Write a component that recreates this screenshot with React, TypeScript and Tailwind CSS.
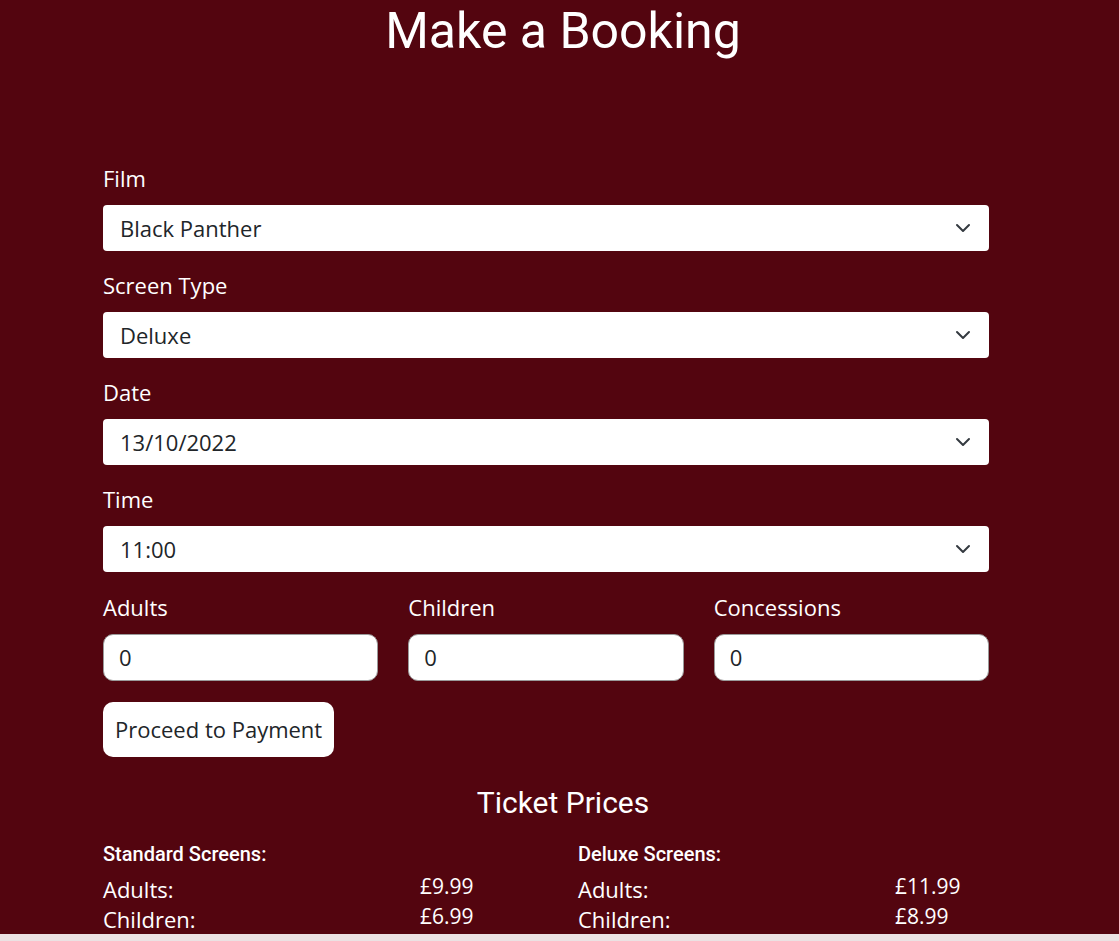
import { ChevronDown } from "lucide-react"

const body = "font-['Open_Sans','DejaVu_Sans',sans-serif]"

function SelectField({ label, value }: { label: string; value: string }) {
  return (
    <div className="mb-[21px]">
      <label className={`block text-[22px] leading-[26px] text-white mb-[14px] ${body}`}>{label}</label>
      <div className="relative h-[46px] bg-white rounded-[4px] flex items-center pl-[17px]">
        <span className={`text-[22px] text-[#212529] ${body}`}>{value}</span>
        <ChevronDown className="absolute right-[14px] top-[11px] w-[24px] h-[24px] text-[#343a40]" strokeWidth={2} />
      </div>
    </div>
  )
}

function NumberField({ label }: { label: string }) {
  return (
    <div>
      <label className={`block text-[22px] leading-[26px] text-white mb-[14px] ${body}`}>{label}</label>
      <div className="h-[47px] bg-white rounded-[10px] border border-[#9a9a9a] flex items-center pl-[15px]">
        <span className={`text-[22px] text-[#212529] ${body}`}>0</span>
      </div>
    </div>
  )
}

function PriceRow({ label, price }: { label: string; price: string }) {
  return (
    <div className="flex items-start h-[30px]">
      <span className={`w-[317px] text-[22px] leading-[30px] text-white ${body}`}>{label}</span>
      <span className={`text-[21px] leading-[30px] text-white -mt-[3px] ${body}`}>{price}</span>
    </div>
  )
}

export default function App() {
  return (
    <div className="min-h-[941px] bg-[#53050f] overflow-hidden">
      <h1 className="text-center text-[50px] leading-[60px] text-white font-['Roboto',sans-serif] pl-[7px] pt-[1px]">
        Make a Booking
      </h1>

      <div className="w-[886px] ml-[103px] mt-[104px]">
        <SelectField label="Film" value="Black Panther" />
        <SelectField label="Screen Type" value="Deluxe" />
        <SelectField label="Date" value="13/10/2022" />
        <SelectField label="Time" value="11:00" />

        <div className="grid grid-cols-3 gap-[30px] pt-[1px]">
          <NumberField label="Adults" />
          <NumberField label="Children" />
          <NumberField label="Concessions" />
        </div>

        <button className={`mt-[21px] h-[55px] px-[12px] bg-white rounded-[10px] text-[22px] text-[#212529] ${body}`}>
          Proceed to Payment
        </button>
      </div>

      <h2 className="text-center text-[30px] leading-[36px] text-white font-['Roboto',sans-serif] pl-[7px] mt-[28px]">
        Ticket Prices
      </h2>

      <div className="ml-[103px] mt-[21px] grid grid-cols-[475px_1fr]">
        <div>
          <h3 className="text-[20px] leading-[24px] font-medium text-white font-['Roboto',sans-serif] mb-[8px]">Standard Screens:</h3>
          <PriceRow label="Adults:" price="£9.99" />
          <PriceRow label="Children:" price="£6.99" />
        </div>
        <div>
          <h3 className="text-[20px] leading-[24px] font-medium text-white font-['Roboto',sans-serif] mb-[8px]">Deluxe Screens:</h3>
          <PriceRow label="Adults:" price="£11.99" />
          <PriceRow label="Children:" price="£8.99" />
        </div>
      </div>

      <div className="fixed bottom-0 left-0 right-0 h-[7px] bg-[#ebe2e3]" />
    </div>
  )
}
